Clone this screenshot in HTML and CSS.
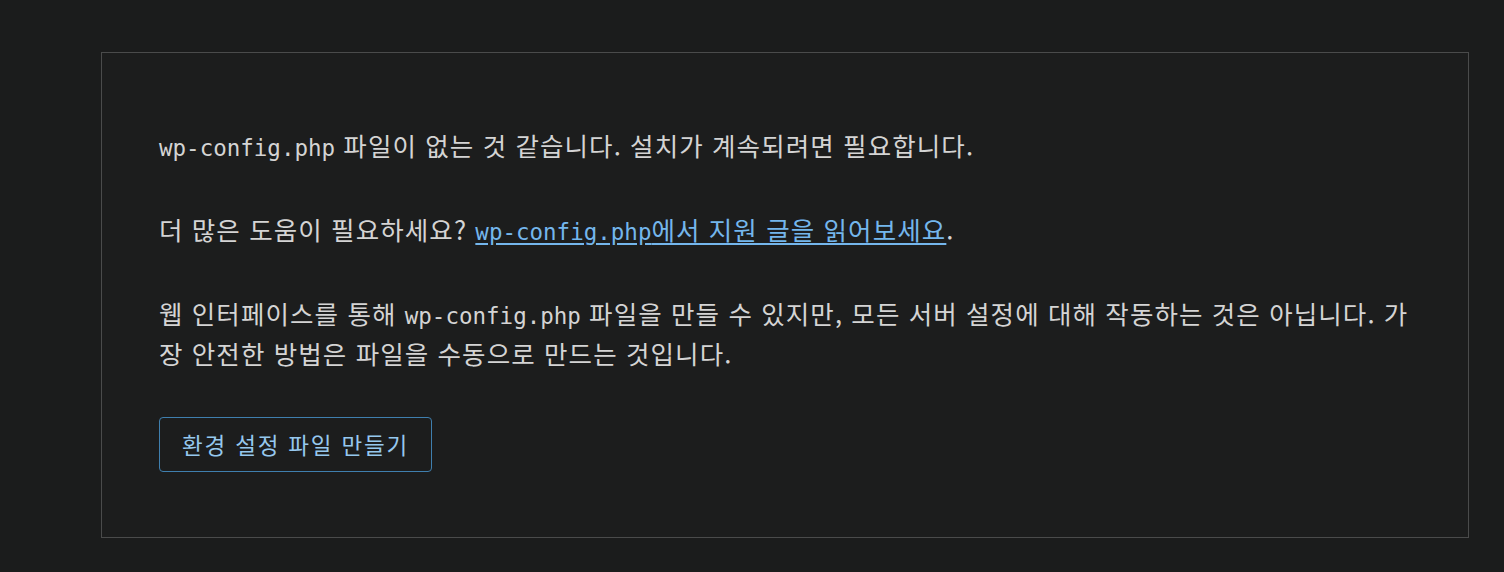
FILE: index.html
```html
<!DOCTYPE html>
<html lang="ko">
<head>
    <meta charset="UTF-8">
    <title>WordPress › 설정 파일 설정</title>
    <link rel="stylesheet" href="styles.css">
</head>
<body>
    <div id="container">
        <p>
            <code>wp-config.php</code> 파일이 없는 것 같습니다. 설치가 계속되려면 필요합니다.
        </p>
        <p>
            더 많은 도움이 필요하세요? <a href="#" class="helpLink"><code>wp-config.php</code>에서 지원 글을 읽어보세요</a>.
        </p>
        <p>
            웹 인터페이스를 통해 <code>wp-config.php</code> 파일을 만들 수 있지만, 모든 서버 설정에 대해 작동하는 것은 아닙니다. 가장 안전한 방법은 파일을 수동으로 만드는 것입니다.
        </p>
        <a href="#" class="setupButton">환경 설정 파일 만들기</a>
    </div>
</body>
</html>
```

FILE: styles.css
```css
:root {
    --page-bg: #1b1c1c;
    --box-bg: #1c1d1d;
    --box-border: #4a4b4b;
    --text-color: #d4d4d4;
    --link-color: #74b6ec;
    --button-border: #3f7fae;
}
body {
    margin: 0;
    background-color: var(--page-bg);
    color: var(--text-color);
    font-family: "Noto Sans CJK KR", "Noto Sans", sans-serif;
    font-size: 25.5px;
    letter-spacing: 1.1px;
}
#container {
    width: 1253px;
    margin: 52px 0 0 101px;
    padding: 72px 56px 65px 57px;
    background: var(--box-bg);
    border: 1px solid var(--box-border);
}
p {
    margin: 0 0 44px 0;
    line-height: 40px;
}
code {
    font-family: "DejaVu Sans Mono", monospace;
    font-size: 22.5px;
    line-height: 1;
    letter-spacing: 0;
}
.helpLink {
    color: var(--link-color);
    text-decoration: underline;
    text-underline-offset: 3px;
}
.setupButton {
    display: inline-block;
    box-sizing: border-box;
    width: 273px;
    height: 55px;
    line-height: 53px;
    text-align: center;
    border: 1px solid var(--button-border);
    border-radius: 4px;
    color: #96c8ee;
    font-size: 22.5px;
    letter-spacing: 1.8px;
    text-decoration: none;
}
```
